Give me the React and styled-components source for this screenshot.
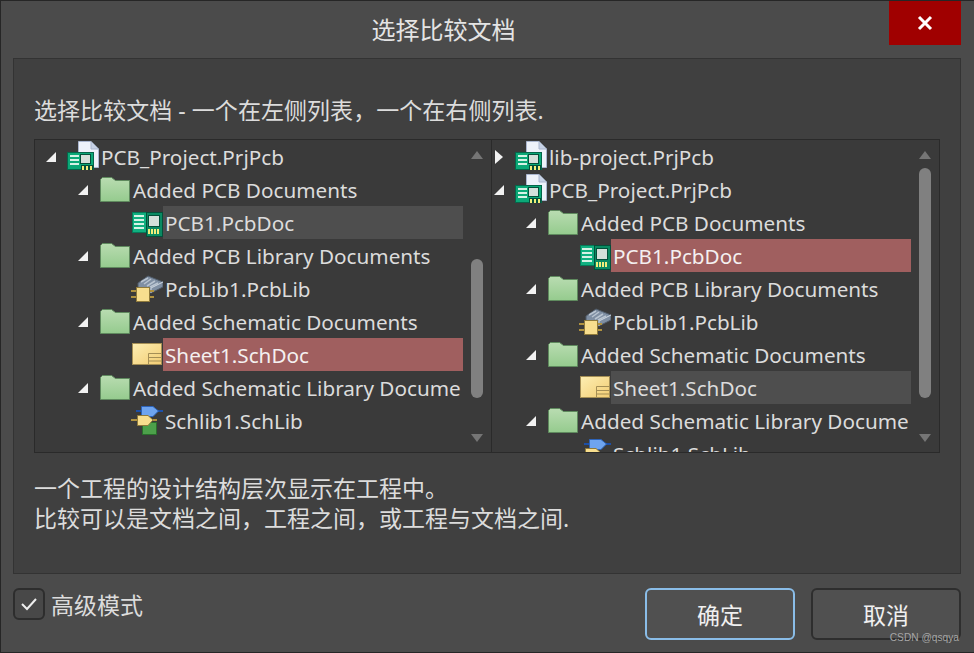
import React from "react";
import styled, { createGlobalStyle } from "styled-components";

const GlobalStyle = createGlobalStyle`
  html, body {
    margin: 0;
    padding: 0;
    background: #4b4b4b;
  }
`;

const FONT = `"Noto Sans", "Noto Sans CJK SC", sans-serif`;

const ChipLines = ({ x, y, width, count, gap }) => (
  <>
    {Array.from({ length: count }).map((_, i) => (
      <rect key={i} x={x} y={y + i * gap} width={width} height="2" fill="#d5f2e5" />
    ))}
  </>
);

const ProjectIcon = () => (
  <svg width="32" height="33" viewBox="0 0 32 33">
    <path d="M11.5 1.5H24L31.5 9V27.5H11.5Z" fill="#eef2fa" stroke="#aab6cf" />
    <path d="M24 1.5V9H31.5" fill="#c7d2e6" stroke="#aab6cf" />
    <rect x="0.5" y="12.5" width="26" height="17" fill="#0ba877" stroke="#05664a" />
    <ChipLines x={3} y={15} width={9} count={3} gap={4} />
    <rect x="13.5" y="14.5" width="10" height="9" fill="#d4e0da" stroke="#04503a" />
    <rect x="14" y="25" width="12" height="5" fill="#04503a" />
    <rect x="15" y="26" width="2" height="4" fill="#f2ee7a" />
    <rect x="19" y="26" width="2" height="4" fill="#f2ee7a" />
    <rect x="23" y="26" width="2" height="4" fill="#f2ee7a" />
  </svg>
);

const BoardIcon = () => (
  <svg width="32" height="33" viewBox="0 0 32 33">
    <rect x="1.5" y="6.5" width="22" height="20" fill="#10b080" stroke="#067a58" />
    <ChipLines x={3} y={9} width={10} count={4} gap={4} />
    <rect x="15.5" y="6.5" width="16" height="24" fill="#0a8a62" stroke="#04503a" />
    <rect x="17.5" y="9.5" width="11" height="11" fill="#d4e0da" stroke="#04503a" />
    <rect x="17" y="23" width="2" height="5" fill="#f2ee7a" />
    <rect x="20" y="23" width="2" height="5" fill="#f2ee7a" />
    <rect x="23" y="23" width="2" height="5" fill="#f2ee7a" />
    <rect x="26" y="23" width="2" height="5" fill="#f2ee7a" />
  </svg>
);

const FolderIcon = () => (
  <svg width="32" height="33" viewBox="0 0 32 33">
    <defs>
      <linearGradient id="folderFill" x1="0" y1="0" x2="0" y2="1">
        <stop offset="0" stopColor="#b9dcb1" />
        <stop offset="1" stopColor="#95cb8e" />
      </linearGradient>
    </defs>
    <path
      d="M1.5 28.5V6.5L3.5 4.5H12.5L16.5 7.5H30.5V28.5Z"
      fill="url(#folderFill)"
      stroke="#5f8a5e"
    />
  </svg>
);

const LibraryIcon = () => (
  <svg width="32" height="33" viewBox="0 0 32 33">
    <path d="M7 11L17 4L32 10V15L20 21L7 16Z" fill="#7f8fa3" stroke="#4f5a68" />
    <path d="M10 10L17 6M13 12L20 7M16 14L24 9M19 15L27 11" stroke="#b9c4d0" strokeWidth="1.5" />
    <path d="M20 21V16L32 10" fill="none" stroke="#cfd8e2" />
    <rect x="0" y="18" width="23" height="2" fill="#b0923f" />
    <rect x="0" y="24" width="23" height="2" fill="#b0923f" />
    <rect x="5.5" y="15.5" width="13" height="14" fill="#f8de8e" stroke="#8f7a3c" />
  </svg>
);

const SheetIcon = () => (
  <svg width="32" height="33" viewBox="0 0 32 33">
    <defs>
      <linearGradient id="sheetFill" x1="0" y1="0" x2="1" y2="1">
        <stop offset="0" stopColor="#fdeeb2" />
        <stop offset="1" stopColor="#f2cd74" />
      </linearGradient>
    </defs>
    <rect x="1.5" y="5.5" width="29" height="21" fill="url(#sheetFill)" stroke="#a58f55" />
    <path d="M17.5 26V15.5H30.5M17.5 19.5H30.5M17.5 23H30.5" fill="none" stroke="#a58f55" />
  </svg>
);

const SchLibIcon = () => (
  <svg width="32" height="33" viewBox="0 0 32 33">
    <rect x="11.5" y="18.5" width="14" height="12" fill="#4ca04a" stroke="#2a6e2c" />
    <rect x="5" y="6" width="27" height="2" fill="#1c4fa8" />
    <path d="M10.5 2.5H22L27.5 7L22 12.5H10.5Z" fill="#6ea4ef" stroke="#2d63b8" />
    <rect x="0" y="15" width="26" height="2" fill="#b0923f" />
    <path d="M6.5 11.5H17L22 16L17 21.5H6.5Z" fill="#f8de8e" stroke="#8f7a3c" />
  </svg>
);

const ICONS = {
  project: ProjectIcon,
  board: BoardIcon,
  folder: FolderIcon,
  library: LibraryIcon,
  sheet: SheetIcon,
  schlib: SchLibIcon,
};

const pcbProject = [
  { depth: 0, arrow: "open", icon: "project", label: "PCB_Project.PrjPcb" },
  { depth: 1, arrow: "open", icon: "folder", label: "Added PCB Documents" },
  { depth: 2, icon: "board", label: "PCB1.PcbDoc", id: "pcb" },
  { depth: 1, arrow: "open", icon: "folder", label: "Added PCB Library Documents" },
  { depth: 2, icon: "library", label: "PcbLib1.PcbLib" },
  { depth: 1, arrow: "open", icon: "folder", label: "Added Schematic Documents" },
  { depth: 2, icon: "sheet", label: "Sheet1.SchDoc", id: "sheet" },
  { depth: 1, arrow: "open", icon: "folder", label: "Added Schematic Library Docume" },
  { depth: 2, icon: "schlib", label: "Schlib1.SchLib" },
];

const libProject = { depth: 0, arrow: "closed", icon: "project", label: "lib-project.PrjPcb" };

const TreePane = ({ rows, inset, width, grey, red, thumbTop, thumbHeight }) => (
  <Pane $width={width}>
    <Rows $inset={inset}>
      {rows.map((row, i) => {
        const Icon = ICONS[row.icon];
        const state = row.id === red ? "red" : row.id === grey ? "grey" : null;
        return (
          <Row key={i} $depth={row.depth}>
            <ArrowSlot>
              {row.arrow && (
                <svg width="10" height="14" viewBox="0 0 10 14">
                  {row.arrow === "open" ? (
                    <path d="M10 2V12H0Z" fill="#f2f2f2" />
                  ) : (
                    <path d="M1 0L9 7L1 14Z" fill="#f2f2f2" />
                  )}
                </svg>
              )}
            </ArrowSlot>
            <IconSlot>
              <Icon />
            </IconSlot>
            <Label $state={state}>{row.label}</Label>
          </Row>
        );
      })}
    </Rows>
    <ScrollColumn>
      <ScrollArrow viewBox="0 0 12 8">
        <path d="M6 0L12 8H0Z" fill="#757575" />
      </ScrollArrow>
      <Track>
        <Thumb $top={thumbTop} $height={thumbHeight} />
      </Track>
      <ScrollArrow viewBox="0 0 12 8">
        <path d="M0 0H12L6 8Z" fill="#757575" />
      </ScrollArrow>
    </ScrollColumn>
  </Pane>
);

const App = () => {
  return (
    <Dialog>
      <GlobalStyle />
      <TitleBar>
        <Title>选择比较文档</Title>
        <CloseButton>
          <svg width="16" height="16" viewBox="0 0 16 16">
            <path d="M2 2L14 14M14 2L2 14" stroke="#fff" strokeWidth="3" />
          </svg>
        </CloseButton>
      </TitleBar>

      <Panel>
        <Intro>选择比较文档 - 一个在左侧列表，一个在右侧列表.</Intro>
        <TreeBox>
          <TreePane
            rows={pcbProject}
            inset={11}
            width={456}
            grey="pcb"
            red="sheet"
            thumbTop={101}
            thumbHeight={139}
          />
          <TreePane
            rows={[libProject, ...pcbProject]}
            inset={2}
            width={447}
            grey="sheet"
            red="pcb"
            thumbTop={10}
            thumbHeight={230}
          />
        </TreeBox>
        <Notes>
          一个工程的设计结构层次显示在工程中。
          <br />
          比较可以是文档之间，工程之间，或工程与文档之间.
        </Notes>
      </Panel>

      <Footer>
        <CheckLabel>
          <CheckBox>
            <svg width="18" height="16" viewBox="0 0 18 16">
              <path d="M2 8L7 13L16 3" fill="none" stroke="#eee" strokeWidth="2" />
            </svg>
          </CheckBox>
          高级模式
        </CheckLabel>
        <Buttons>
          <Button $primary>确定</Button>
          <Button>取消</Button>
        </Buttons>
      </Footer>
      <Watermark>CSDN @qsqya</Watermark>
    </Dialog>
  );
};

export default App;

const Dialog = styled.div`
  position: relative;
  box-sizing: border-box;
  width: 974px;
  height: 653px;
  padding-left: 12px;
  background: #4b4b4b;
  border: 1px solid #262626;
  border-right: none;
  font-family: ${FONT};
  color: #dcdcdc;
  overflow: hidden;
`;

const TitleBar = styled.div`
  position: relative;
  height: 44px;
  margin-bottom: 13px;
  margin-left: -12px;
  display: flex;
  align-items: center;
  justify-content: center;
`;

const Title = styled.div`
  font-size: 24px;
  line-height: 32px;
  margin-top: 14px;
  margin-left: -88px;
  color: #e4e4e4;
`;

const CloseButton = styled.div`
  position: absolute;
  top: 0;
  right: 13px;
  width: 72px;
  height: 44px;
  background: #a00000;
  display: flex;
  align-items: center;
  justify-content: center;
`;

const Panel = styled.div`
  box-sizing: border-box;
  width: 948px;
  height: 516px;
  padding: 36px 20px 0;
  background: #404040;
  border: 1px solid #333;
`;

const Intro = styled.div`
  font-size: 23px;
  line-height: 30px;
  letter-spacing: 0.05px;
  margin-bottom: 14px;
  white-space: nowrap;
`;

const TreeBox = styled.div`
  box-sizing: border-box;
  width: 906px;
  height: 314px;
  display: flex;
  background: #3a3a3a;
  border: 1px solid #2a2a2a;
`;

const Pane = styled.div`
  width: ${(p) => p.$width}px;
  flex: none;
  display: flex;
  overflow: hidden;
  & + & {
    border-left: 1px solid #2a2a2a;
  }
`;

const Rows = styled.div`
  flex: 1;
  min-width: 0;
  padding-left: ${(p) => p.$inset}px;
`;

const Row = styled.div`
  display: flex;
  align-items: center;
  height: 33px;
  padding-left: ${(p) => p.$depth * 32}px;
`;

const ArrowSlot = styled.div`
  flex: none;
  width: 21px;
  display: flex;
  align-items: center;
`;

const IconSlot = styled.div`
  flex: none;
  width: 32px;
  height: 33px;
  svg {
    display: block;
  }
`;

const Label = styled.div`
  flex: 1;
  min-width: 0;
  height: 33px;
  padding-left: 2px;
  font-size: 20.7px;
  line-height: 34px;
  white-space: nowrap;
  overflow: hidden;
  background: ${(p) =>
    p.$state === "red" ? "#a05f5f" : p.$state === "grey" ? "#4e4e4e" : "transparent"};
  color: ${(p) => (p.$state === "red" ? "#f4f0f0" : "inherit")};
`;

const ScrollColumn = styled.div`
  flex: none;
  box-sizing: border-box;
  width: 28px;
  padding: 11px 8px 10px;
  display: flex;
  flex-direction: column;
`;

const ScrollArrow = styled.svg`
  flex: none;
  display: block;
  width: 12px;
  height: 8px;
`;

const Track = styled.div`
  flex: 1;
`;

const Thumb = styled.div`
  width: 12px;
  height: ${(p) => p.$height}px;
  margin-top: ${(p) => p.$top - 1}px;
  border-radius: 6px;
  background: #808080;
`;

const Notes = styled.div`
  margin-top: 20px;
  font-size: 23px;
  line-height: 30px;
  white-space: nowrap;
`;

const Footer = styled.div`
  display: flex;
  justify-content: space-between;
  align-items: flex-start;
  width: 948px;
  margin-top: 14px;
`;

const CheckLabel = styled.div`
  display: flex;
  align-items: center;
  gap: 6px;
  height: 32px;
  font-size: 23px;
`;

const CheckBox = styled.div`
  box-sizing: border-box;
  width: 32px;
  height: 32px;
  display: flex;
  align-items: center;
  justify-content: center;
  background: #484848;
  border: 2px solid #2d2d2d;
  border-radius: 6px;
`;

const Buttons = styled.div`
  display: flex;
  gap: 16px;
`;

const Button = styled.div`
  box-sizing: border-box;
  width: 150px;
  height: 52px;
  display: flex;
  align-items: center;
  justify-content: center;
  font-size: 23px;
  color: #f0f0f0;
  background: #505050;
  border: 2px solid ${(p) => (p.$primary ? "#8abde8" : "#2e2e2e")};
  border-radius: 6px;
`;

const Watermark = styled.div`
  position: absolute;
  right: 15px;
  bottom: 7px;
  font-family: "Liberation Sans", sans-serif;
  font-size: 10.2px;
  line-height: 14px;
  color: #a6a6a6;
`;
